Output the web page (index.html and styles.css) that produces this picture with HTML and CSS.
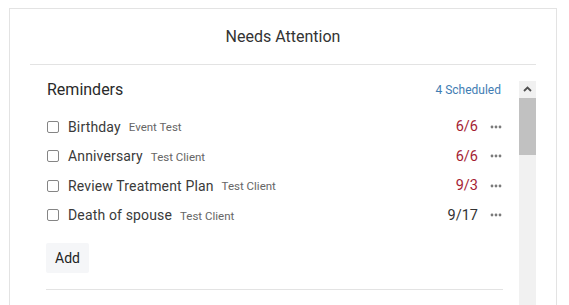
FILE: index.html
```html
<!DOCTYPE html>
<html lang="en">
<head>
<meta charset="utf-8">
<title>Needs Attention</title>
<link rel="stylesheet" href="styles.css">
</head>
<body>
<div class="card">
  <div class="card-header">Needs Attention</div>
  <div class="pane">
    <div class="pane-content">
      <div class="section-head">
        <span class="section-title">Reminders</span>
        <span class="section-count">4 Scheduled</span>
      </div>
      <ul class="list">
        <li class="item">
          <span class="check"></span>
          <span class="name">Birthday</span>
          <span class="sub">Event Test</span>
          <span class="date overdue">6/6</span>
          <span class="more"><svg width="12" height="4" viewBox="0 0 12 4"><circle cx="2" cy="2" r="1.4"/><circle cx="6" cy="2" r="1.4"/><circle cx="10" cy="2" r="1.4"/></svg></span>
        </li>
        <li class="item">
          <span class="check"></span>
          <span class="name">Anniversary</span>
          <span class="sub">Test Client</span>
          <span class="date overdue">6/6</span>
          <span class="more"><svg width="12" height="4" viewBox="0 0 12 4"><circle cx="2" cy="2" r="1.4"/><circle cx="6" cy="2" r="1.4"/><circle cx="10" cy="2" r="1.4"/></svg></span>
        </li>
        <li class="item">
          <span class="check"></span>
          <span class="name">Review Treatment Plan</span>
          <span class="sub">Test Client</span>
          <span class="date overdue">9/3</span>
          <span class="more"><svg width="12" height="4" viewBox="0 0 12 4"><circle cx="2" cy="2" r="1.4"/><circle cx="6" cy="2" r="1.4"/><circle cx="10" cy="2" r="1.4"/></svg></span>
        </li>
        <li class="item">
          <span class="check"></span>
          <span class="name">Death of spouse</span>
          <span class="sub">Test Client</span>
          <span class="date">9/17</span>
          <span class="more"><svg width="12" height="4" viewBox="0 0 12 4"><circle cx="2" cy="2" r="1.4"/><circle cx="6" cy="2" r="1.4"/><circle cx="10" cy="2" r="1.4"/></svg></span>
        </li>
      </ul>
      <button class="add-btn" type="button">Add</button>
      <div class="divider"></div>
    </div>
    <div class="scrollbar">
      <div class="sb-up"><svg width="9" height="6" viewBox="0 0 9 6"><path d="M1 5 L4.5 1.5 L8 5" fill="none" stroke="#505050" stroke-width="1.8"/></svg></div>
      <div class="sb-thumb"></div>
      <div class="sb-track"></div>
    </div>
  </div>
</div>
</body>
</html>
```
FILE: styles.css
```css
html, body {
  margin: 0;
  padding: 0;
  background: #fff;
  overflow: hidden;
  height: 305px;
}
body {
  font-family: Roboto, "Liberation Sans", sans-serif;
  color: #333;
}
.card {
  margin: 8px 12px 0 9px;
  border: 1px solid #e3e3e3;
  border-bottom: none;
  padding: 0 20px;
  height: 297px;
  box-sizing: border-box;
  overflow: hidden;
}
.card-header {
  height: 55px;
  display: flex;
  align-items: center;
  justify-content: center;
  font-size: 16px;
  color: #333;
  border-bottom: 1px solid #e3e3e3;
}
.pane {
  margin-top: 16px;
  display: flex;
  height: 224px;
  overflow: hidden;
}
.pane-content {
  flex: 1;
  padding: 0 16px;
}
.section-head {
  display: flex;
  align-items: center;
  justify-content: space-between;
  height: 17px;
  margin-bottom: 14px;
}
.section-title {
  font-size: 16px;
  color: #2a2a2a;
  padding-left: 1px;
}
.section-count {
  font-size: 12px;
  color: #3f7db3;
  margin-right: 2px;
}
.list {
  list-style: none;
  margin: 0;
  padding: 0;
}
.item {
  display: flex;
  align-items: center;
  height: 29.5px;
}
.check {
  width: 10px;
  height: 10px;
  border: 1.5px solid #858585;
  border-radius: 2px;
  margin-left: 1px;
  margin-right: 9px;
}
.name {
  font-size: 14px;
  color: #3a3a3a;
  letter-spacing: 0.15px;
}
.sub {
  font-size: 11.5px;
  color: #666;
  margin-left: 8px;
  margin-top: 1px;
}
.date {
  margin-left: auto;
  font-size: 14.5px;
  color: #333;
}
.date.overdue {
  color: #a51d34;
}
.more {
  display: flex;
  align-items: center;
  margin-left: 12px;
  margin-right: 1px;
  fill: #7a7a7a;
}
.add-btn {
  margin-top: 13px;
  width: 43px;
  height: 30px;
  border: none;
  background: #f5f6f8;
  font-family: Roboto, "Liberation Sans", sans-serif;
  font-size: 14px;
  color: #222;
  padding: 0;
  border-radius: 2px;
}
.divider {
  margin-top: 16px;
  border-top: 1px solid #e3e3e3;
}
.scrollbar {
  width: 17px;
  display: flex;
  flex-direction: column;
  background: #f1f1f1;
}
.sb-up {
  height: 16px;
  display: flex;
  align-items: center;
  justify-content: center;
}
.sb-thumb {
  height: 57px;
  margin-top: 1px;
  background: #c1c1c1;
}
.sb-track {
  flex: 1;
}
```
